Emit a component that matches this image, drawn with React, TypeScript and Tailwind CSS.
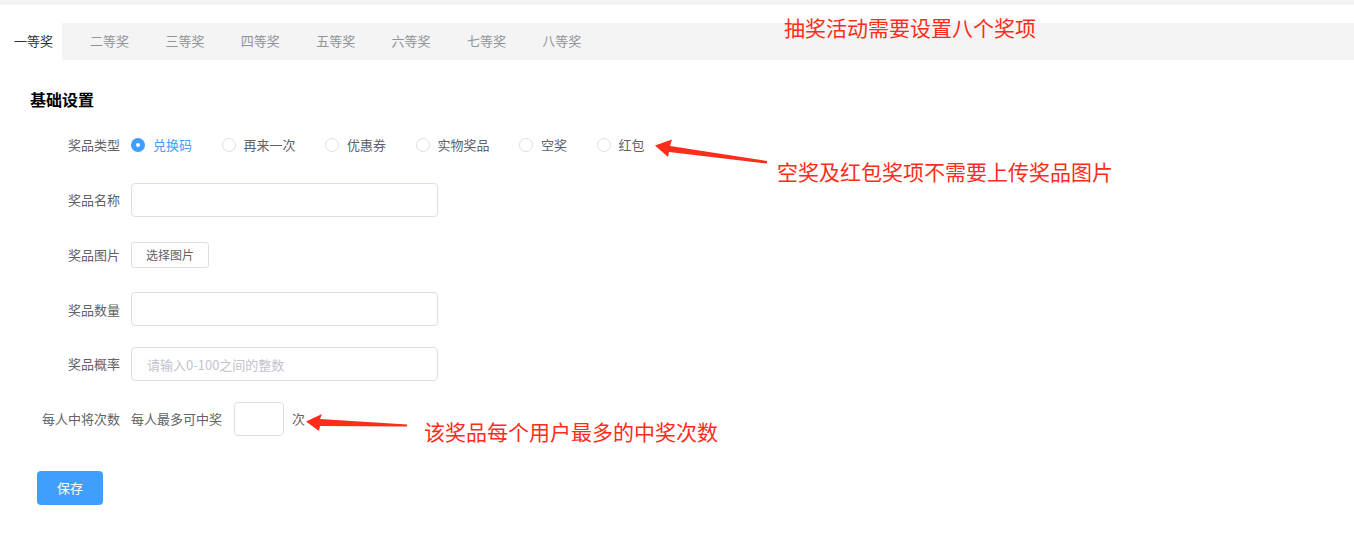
import React from 'react';

const tabs = ['一等奖', '二等奖', '三等奖', '四等奖', '五等奖', '六等奖', '七等奖', '八等奖'];
const prizeTypes = ['兑换码', '再来一次', '优惠券', '实物奖品', '空奖', '红包'];

const FormRow: React.FC<{ label: string; children: React.ReactNode }> = ({ label, children }) => (
  <div className="flex items-center h-[34px]">
    <label className="w-[131px] shrink-0 pr-[11px] text-right text-[13px] text-[#606266] whitespace-nowrap">{label}</label>
    <div className="flex items-center">{children}</div>
  </div>
);

const TextInput: React.FC<{ placeholder?: string; className?: string }> = ({ placeholder, className }) => (
  <input
    placeholder={placeholder}
    className={`h-[34px] border border-[#dcdfe6] rounded-[4px] px-[15px] text-[13px] text-[#606266] placeholder:text-[#c0c4cc] outline-none bg-white ${className ?? 'w-[307px]'}`}
  />
);

export default function App() {
  return (
    <div
      className="relative w-full h-[549px] bg-white overflow-hidden"
      style={{ fontFamily: '"Microsoft YaHei", "Noto Sans CJK SC", "Noto Sans", sans-serif' }}
    >
      <div className="h-[5px] bg-[#f3f3f3]" />

      {/* tabs */}
      <div className="mt-[18px] flex h-[37px] bg-[#f4f4f4]">
        {tabs.map((t, i) => (
          <div
            key={t}
            className={
              i === 0
                ? 'w-[62px] pl-[14px] pb-[1px] bg-white flex items-center text-[13px] text-[#303133]'
                : 'w-[75.4px] pl-[28px] pb-[1px] flex items-center text-[13px] text-[#909399]'
            }
          >
            {t}
          </div>
        ))}
      </div>

      <div className="pl-[30px] pt-[27px] text-[16px] leading-[24px] font-bold text-black">基础设置</div>

      <div className="mt-[17px] flex flex-col gap-[20.8px]">
        <FormRow label="奖品类型">
          {prizeTypes.map((p, i) => (
            <div key={p} className="flex items-center mr-[29.5px]">
              {i === 0 ? (
                <span className="w-[14px] h-[14px] rounded-full bg-[#409eff] flex items-center justify-center">
                  <span className="w-[4px] h-[4px] rounded-full bg-white" />
                </span>
              ) : (
                <span className="w-[14px] h-[14px] rounded-full border border-[#dcdfe6] bg-white" />
              )}
              <span className={`ml-[8px] text-[13px] ${i === 0 ? 'text-[#409eff]' : 'text-[#606266]'}`}>{p}</span>
            </div>
          ))}
        </FormRow>
        <FormRow label="奖品名称">
          <TextInput />
        </FormRow>
        <FormRow label="奖品图片">
          <button className="h-[26px] px-[14px] border border-[#dcdfe6] rounded-[3px] bg-white text-[12px] text-[#606266]">
            选择图片
          </button>
        </FormRow>
        <FormRow label="奖品数量">
          <TextInput />
        </FormRow>
        <FormRow label="奖品概率">
          <TextInput placeholder="请输入0-100之间的整数" />
        </FormRow>
        <FormRow label="每人中将次数">
          <span className="text-[13px] text-[#606266]">每人最多可中奖</span>
          <TextInput className="w-[50px] ml-[12px]" />
          <span className="ml-[8px] text-[13px] text-[#606266]">次</span>
        </FormRow>
      </div>

      <div className="pl-[37px] mt-[35px]">
        <button className="w-[66px] h-[34px] rounded-[4px] bg-[#409eff] text-white text-[13px]">保存</button>
      </div>

      {/* annotations */}
      <div className="absolute left-[784px] top-[17px] text-[21px] leading-[21px] text-[#fe2c1b] whitespace-nowrap">
        抽奖活动需要设置八个奖项
      </div>
      <div className="absolute left-[777px] top-[161px] text-[21px] leading-[21px] text-[#fe2c1b] whitespace-nowrap">
        空奖及红包奖项不需要上传奖品图片
      </div>
      <div className="absolute left-[424px] top-[421px] text-[21px] leading-[21px] text-[#fe2c1b] whitespace-nowrap">
        该奖品每个用户最多的中奖次数
      </div>
      <svg className="absolute left-0 top-0 pointer-events-none" width="1354" height="549">
        <polygon
          fill="#fe2c1b"
          points="655,145.5 672,139.5 670,146 767,161 767,163.5 669,152 668,157"
        />
        <polygon
          fill="#fe2c1b"
          points="306,421.5 322,414 320,419 407,424.5 407,426.5 320,426 319,431"
        />
      </svg>
    </div>
  );
}
